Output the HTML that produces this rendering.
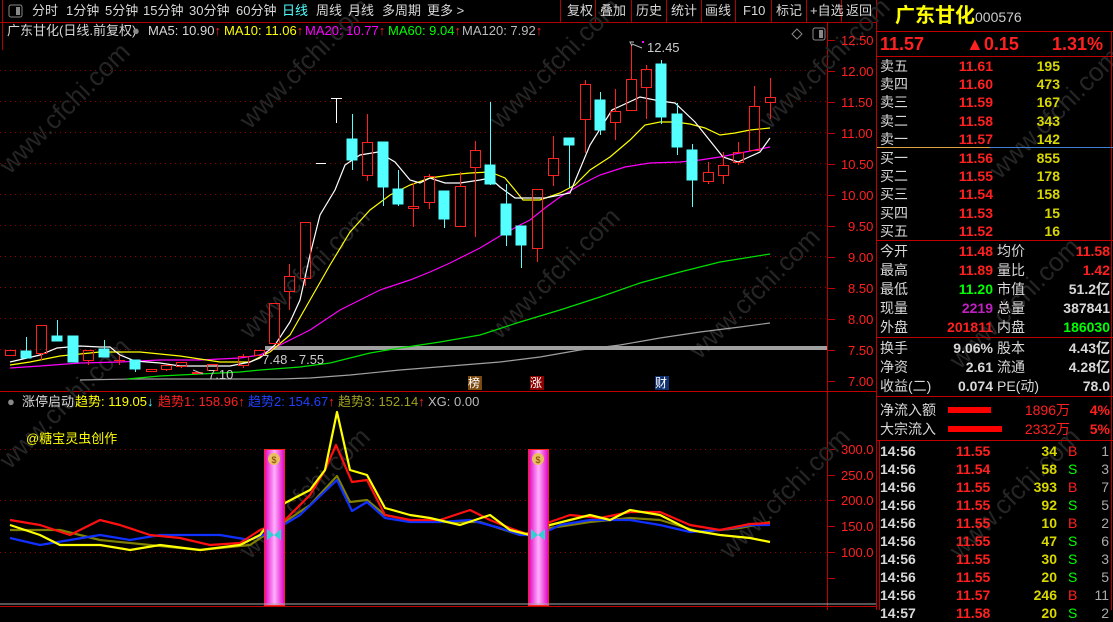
<!DOCTYPE html>
<html><head><meta charset="utf-8"><style>
*{margin:0;padding:0;box-sizing:border-box}
body{width:1113px;height:610px;background:#000;overflow:hidden;position:relative;font-family:"Liberation Sans","Noto Sans CJK SC",sans-serif;color:#c0c0c0}
.t{position:absolute;white-space:nowrap;font-size:13px;line-height:16px}
.r{color:#ff2020}.y{color:#ffff00}.g{color:#00ff00}.w{color:#d8d8d8}.c{color:#50ffff}.m{color:#ff00ff}.b{color:#2040ff}.o{color:#a0a020}.yy{color:#d8d800}
.rp{position:absolute;white-space:nowrap;font-size:14px;line-height:18px}
.ra{text-align:right}
</style></head><body>
<svg width="1113" height="610" style="position:absolute;left:0;top:0">
<line x1="0" y1="22.5" x2="877" y2="22.5" stroke="#b00000"/>
<line x1="2.5" y1="0" x2="2.5" y2="50" stroke="#b00000"/>
<rect x="9" y="5" width="13" height="12" rx="2" fill="none" stroke="#888"/><rect x="16" y="7" width="4" height="8" fill="#888"/>
<g stroke="#b00000"><line x1="560.5" y1="0" x2="560.5" y2="22"/><line x1="595.5" y1="0" x2="595.5" y2="22"/><line x1="631.5" y1="0" x2="631.5" y2="22"/><line x1="666.5" y1="0" x2="666.5" y2="22"/><line x1="701.5" y1="0" x2="701.5" y2="22"/><line x1="735.5" y1="0" x2="735.5" y2="22"/><line x1="771.5" y1="0" x2="771.5" y2="22"/><line x1="806.5" y1="0" x2="806.5" y2="22"/><line x1="841.5" y1="0" x2="841.5" y2="22"/></g>
<line x1="876.5" y1="0" x2="876.5" y2="610" stroke="#c00000"/>
<line x1="827.5" y1="22" x2="827.5" y2="610" stroke="#c00000"/>
<line x1="0" y1="391.5" x2="876" y2="391.5" stroke="#c00000"/>
<line x1="0" y1="606.5" x2="876" y2="606.5" stroke="#c00000"/>
<g stroke="#900000" stroke-dasharray="1,4">
<line x1="0" y1="70.5" x2="827" y2="70.5"/><line x1="0" y1="101.5" x2="827" y2="101.5"/><line x1="0" y1="132.5" x2="827" y2="132.5"/><line x1="0" y1="163.5" x2="827" y2="163.5"/><line x1="0" y1="194.5" x2="827" y2="194.5"/><line x1="0" y1="225.5" x2="827" y2="225.5"/><line x1="0" y1="256.5" x2="827" y2="256.5"/><line x1="0" y1="287.5" x2="827" y2="287.5"/><line x1="0" y1="318.5" x2="827" y2="318.5"/><line x1="0" y1="349.5" x2="827" y2="349.5"/>
<line x1="0" y1="449.5" x2="827" y2="449.5"/><line x1="0" y1="500.5" x2="827" y2="500.5"/><line x1="0" y1="552.5" x2="827" y2="552.5"/>
</g>
<g stroke="#c00000">
<line x1="827" y1="40.5" x2="835" y2="40.5"/><line x1="827" y1="71.5" x2="835" y2="71.5"/><line x1="827" y1="102.5" x2="835" y2="102.5"/><line x1="827" y1="133.5" x2="835" y2="133.5"/><line x1="827" y1="164.5" x2="835" y2="164.5"/><line x1="827" y1="195.5" x2="835" y2="195.5"/><line x1="827" y1="226.5" x2="835" y2="226.5"/><line x1="827" y1="257.5" x2="835" y2="257.5"/><line x1="827" y1="288.5" x2="835" y2="288.5"/><line x1="827" y1="319.5" x2="835" y2="319.5"/><line x1="827" y1="350.5" x2="835" y2="350.5"/><line x1="827" y1="381.5" x2="835" y2="381.5"/>
<line x1="827" y1="449.5" x2="835" y2="449.5"/><line x1="827" y1="475.5" x2="835" y2="475.5"/><line x1="827" y1="500.5" x2="835" y2="500.5"/><line x1="827" y1="526.5" x2="835" y2="526.5"/><line x1="827" y1="552.5" x2="835" y2="552.5"/><line x1="827" y1="578.5" x2="835" y2="578.5"/>
</g>
<g fill="#252525" font-size="26" font-family="Liberation Sans">
<text transform="translate(10,175) rotate(-45)">www.cfchi.com</text>
<text transform="translate(250,130) rotate(-45)">www.cfchi.com</text>
<text transform="translate(500,130) rotate(-45)">www.cfchi.com</text>
<text transform="translate(770,130) rotate(-45)">www.cfchi.com</text>
<text transform="translate(10,470) rotate(-45)">www.cfchi.com</text>
<text transform="translate(250,340) rotate(-45)">www.cfchi.com</text>
<text transform="translate(500,340) rotate(-45)">www.cfchi.com</text>
<text transform="translate(700,360) rotate(-45)">www.cfchi.com</text>
<text transform="translate(250,560) rotate(-45)">www.cfchi.com</text>
<text transform="translate(730,560) rotate(-45)">www.cfchi.com</text>
<text transform="translate(1000,180) rotate(-45)">www.cfchi.com</text>
<text transform="translate(960,370) rotate(-45)">www.cfchi.com</text>
<text transform="translate(960,560) rotate(-45)">www.cfchi.com</text>
</g>
<rect x="265" y="346" width="562" height="4" fill="#a0a0a0"/>
<g fill="none" stroke-width="1.2">
<polyline stroke="#a0a0a0" points="80,380 130,379 240,379 280,379 310,378 350,375 400,370 450,366 500,362 540,357 580,350 620,345 660,338 700,332 740,327 770,323"/>
<polyline stroke="#00e000" points="127,379 160,376 200,374 240,372 260,370 300,367 330,363 370,353 400,348 440,342 480,335 520,322 560,310 600,297 640,283 680,272 720,262 770,254"/>
<polyline stroke="#ff00ff" points="10,368 40,366 80,363 120,362 160,360 200,360 240,358 260,355 290,340 310,330 340,310 380,290 410,280 430,272 450,263 480,248 500,236 520,225 530,220 545,208 560,197 580,185 600,175 625,167 650,163 680,162 700,160 720,157 740,153 770,147"/>
<polyline stroke="#ffff00" points="10,365 30,362 60,356 100,352 140,352 180,356 220,362 250,362 270,352 290,335 310,300 330,265 350,232 370,210 390,195 410,185 430,178 450,175 470,173 490,172 505,178 515,190 523,200 540,200 560,193 575,185 590,170 610,157 630,140 645,125 660,122 675,122 690,124 705,128 720,135 735,133 750,130 770,128"/>
<polyline stroke="#ffffff" points="10,362 40,355 57,348 80,346 100,347 110,347 120,355 135,361 160,363 180,366 200,366 230,366 250,362 260,358 275,345 290,322 300,300 310,255 320,215 335,190 345,165 360,155 378,152 395,162 410,180 420,183 430,178 445,183 460,183 480,180 490,178 500,187 515,198 545,198 570,193 590,145 612,110 640,97 660,101 675,103 695,122 723,157 738,162 760,152 770,138"/>
</g>
<g fill="none" stroke="#ff2020" stroke-width="1">
<path d="M5.5,350.5h10v5h-10z"/>
<path d="M36.5,325.5h10v28h-10zM41.5,353v7"/>
<path d="M83.5,350.5h10v10h-10zM88.5,360v5"/>
<path d="M119.5,355v10M114,360.5h11"/>
<path d="M146.5,369.5h10v2h-10z"/>
<path d="M161.5,365.5h10v4h-10zM166.5,369v2"/>
<path d="M176.5,362.5h10v4h-10zM181.5,366v2"/>
<path d="M192.5,372.5h10v1h-10z"/>
<path d="M207.5,364.5h10v6h-10z"/>
<path d="M238.5,356.5h10v9h-10zM243.5,354v2M243.5,365v3"/>
<path d="M254.5,350.5h10v5h-10z"/>
<path d="M269.5,303.5h10v40h-10zM274.5,343v2"/>
<path d="M284.5,276.5h10v15h-10zM289.5,264v12M289.5,291v19"/>
<path d="M300.5,222.5h10v56h-10zM305.5,278v8"/>
<path d="M362.5,142.5h10v33h-10zM367.5,114v28M367.5,175v6"/>
<path d="M408.5,206.5h10v2h-10zM413.5,183v23M413.5,208v19"/>
<path d="M424.5,176.5h10v26h-10zM429.5,174v2M429.5,202v7"/>
<path d="M455.5,186.5h10v40h-10zM460.5,172v14"/>
<path d="M470.5,150.5h10v17h-10zM475.5,141v9M475.5,167v70"/>
<path d="M532.5,189.5h10v59h-10zM537.5,248v14"/>
<path d="M548.5,158.5h10v17h-10zM553.5,136v22M553.5,175v11"/>
<path d="M580.5,84.5h10v35h-10zM585.5,80v4M585.5,119v34"/>
<path d="M610.5,111.5h10v11h-10zM615.5,89v22M615.5,122v18"/>
<path d="M626.5,79.5h10v31h-10zM631.5,45v34"/>
<path d="M641.5,69.5h10v18h-10zM646.5,65v4M646.5,87v32"/>
<path d="M703.5,172.5h10v9h-10zM708.5,162v10M708.5,181v3"/>
<path d="M718.5,165.5h10v10h-10zM723.5,152v13M723.5,175v9"/>
<path d="M733.5,152.5h10v10h-10zM738.5,142v10M738.5,162v3"/>
<path d="M749.5,106.5h10v44h-10zM754.5,86v20"/>
<path d="M765.5,97.5h10v5h-10zM770.5,78v19M770.5,102v17"/>
</g>
<g fill="#54ffff" stroke="#54ffff" stroke-width="1">
<rect x="21" y="351" width="10" height="7"/><line x1="26.5" y1="337" x2="26.5" y2="351"/>
<rect x="52" y="336" width="10" height="5"/><line x1="57.5" y1="320" x2="57.5" y2="336"/>
<rect x="68" y="336" width="10" height="26"/>
<rect x="99" y="349" width="10" height="8"/><line x1="104.5" y1="340" x2="104.5" y2="349"/>
<rect x="130" y="360" width="10" height="9"/><line x1="135.5" y1="369" x2="135.5" y2="372"/>
<rect x="347" y="139" width="10" height="21"/><line x1="352.5" y1="114" x2="352.5" y2="170"/>
<rect x="378" y="142" width="10" height="45"/><line x1="383.5" y1="187" x2="383.5" y2="206"/>
<rect x="393" y="189" width="10" height="15"/><line x1="398.5" y1="170" x2="398.5" y2="206"/>
<rect x="439" y="191" width="10" height="28"/><line x1="444.5" y1="219" x2="444.5" y2="228"/>
<rect x="485" y="165" width="10" height="19"/><line x1="490.5" y1="102" x2="490.5" y2="185"/>
<rect x="501" y="204" width="10" height="31"/><line x1="506.5" y1="184" x2="506.5" y2="246"/>
<rect x="516" y="226" width="10" height="19"/><line x1="521.5" y1="245" x2="521.5" y2="268"/>
<rect x="564" y="138" width="10" height="7"/><line x1="569.5" y1="145" x2="569.5" y2="188"/>
<rect x="595" y="100" width="10" height="30"/><line x1="600.5" y1="92" x2="600.5" y2="135"/>
<rect x="656" y="64" width="10" height="53"/><line x1="661.5" y1="60" x2="661.5" y2="124"/>
<rect x="672" y="114" width="10" height="33"/><line x1="677.5" y1="103" x2="677.5" y2="155"/>
<rect x="687" y="150" width="10" height="30"/><line x1="692.5" y1="144" x2="692.5" y2="207"/>
</g>
<g stroke="#fff"><line x1="336.5" y1="98" x2="336.5" y2="123"/><line x1="331" y1="98.5" x2="342" y2="98.5"/><line x1="316" y1="163.5" x2="326" y2="163.5"/></g>
<path d="M632,46 L630,42 L634,42 M632,44 L642,48" stroke="#bbb" fill="none"/>
<rect x="642" y="41" width="2" height="2" fill="#f0f"/>
<path d="M193,370 L203,374" stroke="#bbb"/>
<path d="M797,29 L802,34 L797,39 L792,34Z" fill="none" stroke="#888"/>
<rect x="813" y="28" width="12" height="12" rx="2" fill="none" stroke="#888"/><rect x="819" y="30" width="4" height="8" fill="#888"/>
<g fill="none" stroke-width="2.2" stroke-linejoin="round">
<polyline stroke="#808000" points="10,530 60,530 100,540 150,545 200,550 250,545 280,525 310,505 337,476 350,502 367,500 385,515 410,520 440,522 480,522 520,535 550,528 590,522 630,518 660,520 700,532 740,528 770,522"/>
<polyline stroke="#1030ff" points="10,538 40,545 70,540 100,535 130,540 160,535 190,535 220,535 250,540 275,530 300,515 337,480 352,511 367,502 385,518 410,522 440,522 470,520 500,528 520,535 540,535 560,525 590,520 630,520 660,525 690,532 720,530 750,525 770,525"/>
<polyline stroke="#ff1010" points="10,520 40,525 70,535 100,520 120,525 150,535 180,538 210,545 240,543 260,530 285,520 310,495 325,470 336,445 352,482 367,480 385,515 410,520 440,520 470,510 490,520 510,528 530,535 550,522 570,515 600,518 630,512 660,512 690,525 720,530 750,524 770,523"/>
<polyline stroke="#ffff00" points="10,525 40,535 60,545 100,545 130,550 160,545 200,550 240,545 260,535 285,503 310,490 325,470 337,412 350,470 367,475 385,508 410,515 430,518 460,525 490,515 510,530 530,535 550,525 570,520 590,515 610,520 630,510 660,515 690,530 720,535 750,538 770,542"/>
</g>
<defs><linearGradient id="pk" x1="0" x2="1"><stop offset="0" stop-color="#e000c0"/><stop offset="0.5" stop-color="#ffb0ff"/><stop offset="1" stop-color="#e000c0"/></linearGradient></defs>
<rect x="264.5" y="449.5" width="20" height="156" fill="url(#pk)" stroke="#ff2020"/>
<rect x="528.5" y="449.5" width="20" height="156" fill="url(#pk)" stroke="#ff2020"/>
<g><circle cx="274" cy="459" r="6" fill="#e8c060"/><circle cx="538" cy="459" r="6" fill="#e8c060"/></g>
<text x="274" y="463" font-size="9" text-anchor="middle" fill="#804000">$</text><text x="538" y="463" font-size="9" text-anchor="middle" fill="#804000">$</text>
<g fill="#30d0d0"><path d="M274,535 l-7,-6 l0,11z M274,535 l7,-6 l0,11z"/><path d="M538,535 l-7,-6 l0,11z M538,535 l7,-6 l0,11z"/></g>
<line x1="0" y1="604" x2="876" y2="604" stroke="#aaa"/>
<g stroke="#c00000">
<line x1="877" y1="31.5" x2="1113" y2="31.5"/><line x1="877" y1="56.5" x2="1113" y2="56.5"/>
<line x1="877" y1="240.5" x2="1113" y2="240.5"/><line x1="877" y1="337.5" x2="1113" y2="337.5"/>
<line x1="877" y1="396.5" x2="1113" y2="396.5"/><line x1="877" y1="440.5" x2="1113" y2="440.5"/>
<line x1="1111.5" y1="31" x2="1111.5" y2="610"/><line x1="879.5" y1="440" x2="879.5" y2="610"/>
</g>
<line x1="877" y1="147.5" x2="990" y2="147.5" stroke="#e0a040"/><line x1="990" y1="147.5" x2="1113" y2="147.5" stroke="#4080d0"/>
<rect x="948" y="407" width="43" height="6" fill="#ff0000"/><rect x="948" y="426" width="54" height="6" fill="#ff0000"/>
</svg>

<div class="t w" style="left:32px;top:3px">分时</div>
<div class="t w" style="left:66px;top:3px">1分钟</div>
<div class="t w" style="left:105px;top:3px">5分钟</div>
<div class="t w" style="left:143px;top:3px">15分钟</div>
<div class="t w" style="left:189px;top:3px">30分钟</div>
<div class="t w" style="left:236px;top:3px">60分钟</div>
<div class="t c" style="left:282px;top:3px">日线</div>
<div class="t w" style="left:316px;top:3px">周线</div>
<div class="t w" style="left:348px;top:3px">月线</div>
<div class="t w" style="left:382px;top:3px">多周期</div>
<div class="t w" style="left:427px;top:3px">更多 &gt;</div>
<div class="t w" style="left:567px;top:3px">复权</div>
<div class="t w" style="left:600px;top:3px">叠加</div>
<div class="t w" style="left:636px;top:3px">历史</div>
<div class="t w" style="left:671px;top:3px">统计</div>
<div class="t w" style="left:705px;top:3px">画线</div>
<div class="t w" style="left:743px;top:3px">F10</div>
<div class="t w" style="left:776px;top:3px">标记</div>
<div class="t w" style="left:810px;top:3px">+自选</div>
<div class="t w" style="left:846px;top:3px">返回</div>
<div class="t w" style="left:7px;top:23px">广东甘化(日线.前复权)</div>
<div class="t" style="left:132px;top:23px;color:#888">●</div>
<div class="t w" style="left:148px;top:23px">MA5: 10.90<span class="r">↑</span></div>
<div class="t y" style="left:224px;top:23px">MA10: 11.06<span class="r">↑</span></div>
<div class="t m" style="left:305px;top:23px">MA20: 10.77<span class="r">↑</span></div>
<div class="t g" style="left:388px;top:23px">MA60: 9.04<span class="r">↑</span></div>
<div class="t" style="left:462px;top:23px;color:#bbb">MA120: 7.92<span class="r">↑</span></div>
<div class="t r" style="left:841px;top:33px">12.50</div>
<div class="t r" style="left:841px;top:64px">12.00</div>
<div class="t r" style="left:841px;top:95px">11.50</div>
<div class="t r" style="left:841px;top:126px">11.00</div>
<div class="t r" style="left:841px;top:157px">10.50</div>
<div class="t r" style="left:841px;top:188px">10.00</div>
<div class="t r" style="left:848px;top:219px">9.50</div>
<div class="t r" style="left:848px;top:250px">9.00</div>
<div class="t r" style="left:848px;top:281px">8.50</div>
<div class="t r" style="left:848px;top:312px">8.00</div>
<div class="t r" style="left:848px;top:343px">7.50</div>
<div class="t r" style="left:848px;top:374px">7.00</div>
<div class="t r" style="left:841px;top:442px">300.0</div>
<div class="t r" style="left:841px;top:468px">250.0</div>
<div class="t r" style="left:841px;top:493px">200.0</div>
<div class="t r" style="left:841px;top:519px">150.0</div>
<div class="t r" style="left:841px;top:545px">100.0</div>
<div class="t" style="left:647px;top:40px;color:#ccc">12.45</div>
<div class="t" style="left:262px;top:352px;color:#ccc">7.48 - 7.55</div>
<div class="t" style="left:208px;top:367px;color:#ccc">7.10</div>
<div class="t" style="left:468px;top:376px;width:14px;height:14px;background:#7a4a10;color:#fff;font-size:12px;line-height:14px">榜</div>
<div class="t" style="left:530px;top:376px;width:14px;height:14px;background:#8a0000;color:#fff;font-size:12px;line-height:14px">涨</div>
<div class="t" style="left:655px;top:376px;width:14px;height:14px;background:#103070;color:#fff;font-size:12px;line-height:14px">财</div>
<div class="t" style="left:7px;top:394px;color:#888">●</div>
<div class="t w" style="left:22px;top:394px">涨停启动</div>
<div class="t y" style="left:75px;top:394px">趋势: 119.05<span class="c">↓</span></div>
<div class="t r" style="left:158px;top:394px">趋势1: 158.96↑</div>
<div class="t b" style="left:248px;top:394px">趋势2: 154.67<span class="r">↑</span></div>
<div class="t o" style="left:338px;top:394px">趋势3: 152.14<span class="r">↑</span></div>
<div class="t" style="left:428px;top:394px;color:#bbb">XG: 0.00</div>
<div class="t y" style="left:26px;top:431px">@糖宝灵虫创作</div>
<div class="rp y" style="left:895px;top:3px;font-size:20px;line-height:26px;font-weight:bold">广东甘化</div>
<div class="rp" style="left:975px;top:8px;color:#ccc">000576</div>
<div class="rp r" style="left:880px;top:33px;font-size:18px;line-height:22px;font-weight:bold">11.57</div>
<div class="rp r" style="left:966px;top:33px;font-size:18px;line-height:22px;font-weight:bold">▲0.15</div>
<div class="rp r" style="left:1052px;top:33px;font-size:18px;line-height:22px;font-weight:bold">1.31%</div>
<div class="rp w" style="left:880px;top:57px;line-height:18.2px">卖五<br>卖四<br>卖三<br>卖二<br>卖一</div>
<div class="rp r ra" style="left:940px;width:53px;top:57px;line-height:18.2px;font-weight:bold">11.61<br>11.60<br>11.59<br>11.58<br>11.57</div>
<div class="rp yy ra" style="left:1010px;width:50px;top:57px;line-height:18.2px;font-weight:bold">195<br>473<br>167<br>343<br>142</div>
<div class="rp w" style="left:880px;top:149px;line-height:18.2px">买一<br>买二<br>买三<br>买四<br>买五</div>
<div class="rp r ra" style="left:940px;width:53px;top:149px;line-height:18.2px;font-weight:bold">11.56<br>11.55<br>11.54<br>11.53<br>11.52</div>
<div class="rp yy ra" style="left:1010px;width:50px;top:149px;line-height:18.2px;font-weight:bold">855<br>178<br>158<br>15<br>16</div>
<div class="rp w" style="left:880px;top:242px;line-height:19px">今开<br>最高<br>最低<br>现量<br>外盘</div>
<div class="rp ra" style="left:920px;width:73px;top:242px;line-height:19px;font-weight:bold"><span class="r">11.48</span><br><span class="r">11.89</span><br><span class="g">11.20</span><br><span style="color:#c020c0">2219</span><br><span class="r">201811</span></div>
<div class="rp w" style="left:997px;top:242px;line-height:19px">均价<br>量比<br>市值<br>总量<br>内盘</div>
<div class="rp ra" style="left:1040px;width:70px;top:242px;line-height:19px;font-weight:bold"><span class="r">11.58</span><br><span class="r">1.42</span><br><span class="w">51.2亿</span><br><span class="w">387841</span><br><span class="g">186030</span></div>
<div class="rp w" style="left:880px;top:339px;line-height:19px">换手<br>净资<br>收益(二)</div>
<div class="rp w ra" style="left:920px;width:73px;top:339px;line-height:19px;font-weight:bold">9.06%<br>2.61<br>0.074</div>
<div class="rp w" style="left:997px;top:339px;line-height:19px">股本<br>流通<br>PE(动)</div>
<div class="rp w ra" style="left:1040px;width:70px;top:339px;line-height:19px;font-weight:bold">4.43亿<br>4.28亿<br>78.0</div>
<div class="rp w" style="left:880px;top:401px;line-height:19px">净流入额<br>大宗流入</div>
<div class="rp r ra" style="left:1010px;width:60px;top:401px;line-height:19px">1896万<br>2332万</div>
<div class="rp r ra" style="left:1070px;width:40px;top:401px;line-height:19px;font-weight:bold">4%<br>5%</div>
<div class="rp w" style="left:880px;top:442px;line-height:18px;font-weight:bold">14:56<br>14:56<br>14:56<br>14:56<br>14:56<br>14:56<br>14:56<br>14:56<br>14:56<br>14:57</div>
<div class="rp r" style="left:956px;top:442px;line-height:18px;font-weight:bold">11.55<br>11.54<br>11.55<br>11.55<br>11.55<br>11.55<br>11.55<br>11.55<br>11.57<br>11.58</div>
<div class="rp yy ra" style="left:1010px;width:47px;top:442px;line-height:18px;font-weight:bold">34<br>58<br>393<br>92<br>10<br>47<br>30<br>20<br>246<br>20</div>
<div class="rp" style="left:1068px;top:442px;line-height:18px"><span class="r">B</span><br><span class="g">S</span><br><span class="r">B</span><br><span class="g">S</span><br><span class="r">B</span><br><span class="g">S</span><br><span class="g">S</span><br><span class="g">S</span><br><span class="r">B</span><br><span class="g">S</span></div>
<div class="rp ra" style="left:1080px;width:29px;top:442px;line-height:18px;color:#aaa">1<br>3<br>7<br>5<br>2<br>6<br>3<br>5<br>11<br>2</div>
</body></html>
